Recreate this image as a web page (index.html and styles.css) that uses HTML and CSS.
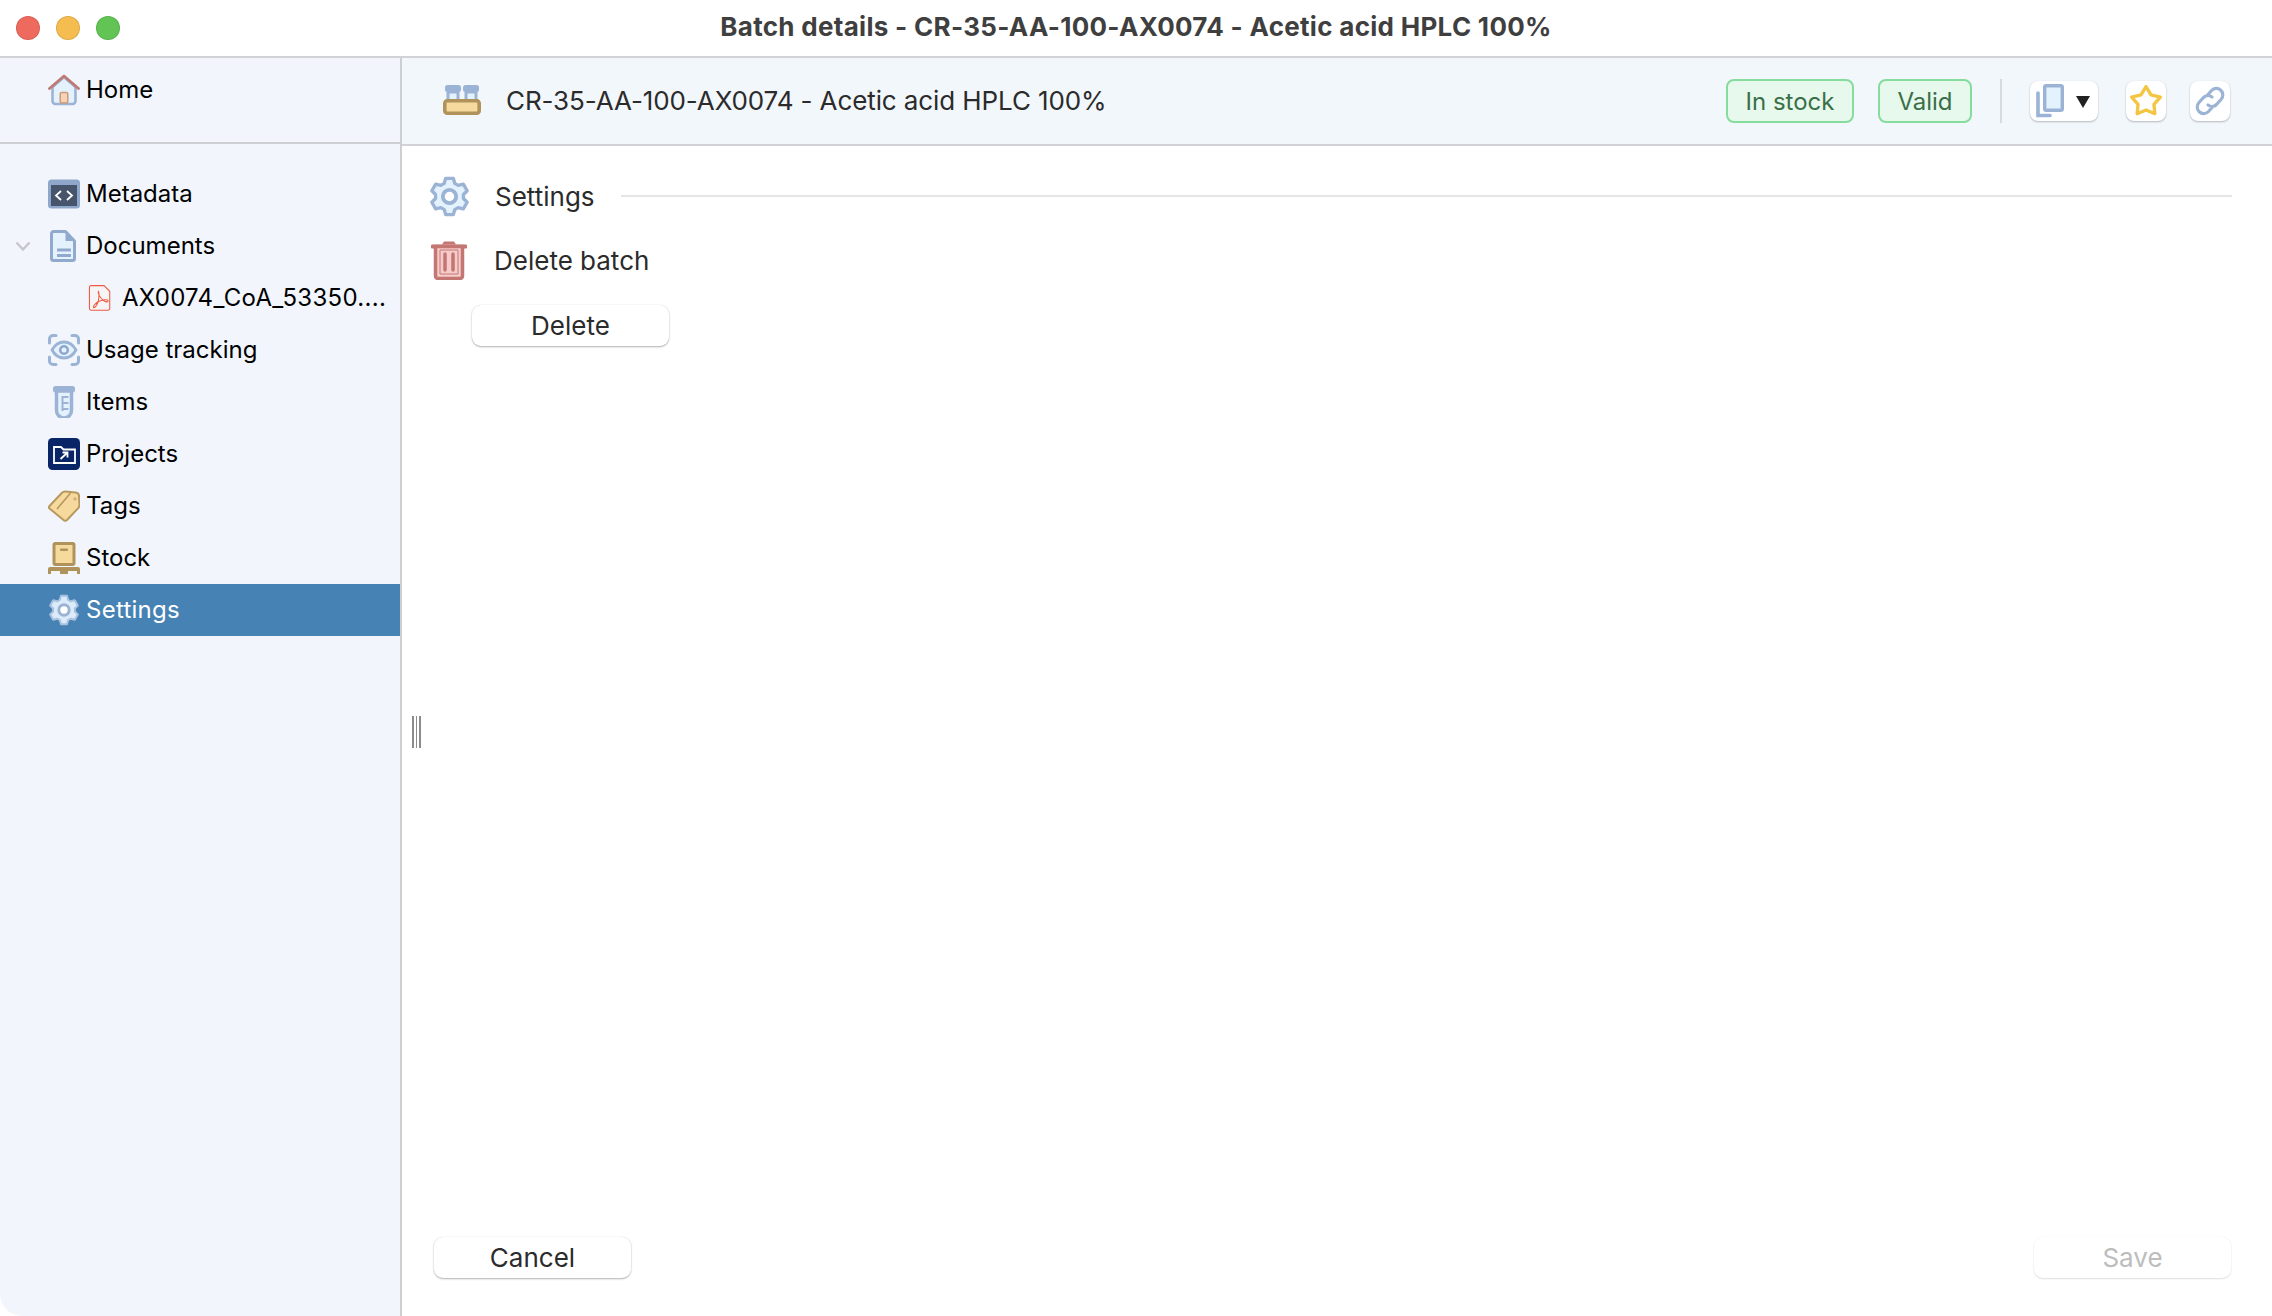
FILE: index.html
```html
<!DOCTYPE html>
<html lang="en">
<head>
<meta charset="utf-8">
<title>Batch details</title>
<link rel="stylesheet" href="styles.css">
</head>
<body>
<svg class="defs" width="0" height="0" aria-hidden="true">
  <symbol id="cog" viewBox="0 0 32 32">
    <polygon points="11.88,5.8 12.99,1.82 19.01,1.82 20.12,5.8 22.77,7.33 26.78,6.3 29.79,11.52 26.89,14.47 26.89,17.53 29.79,20.48 26.78,25.7 22.77,24.67 20.12,26.2 19.01,30.18 12.99,30.18 11.88,26.2 9.23,24.67 5.22,25.7 2.21,20.48 5.11,17.53 5.11,14.47 2.21,11.52 5.22,6.3 9.23,7.33" stroke-linejoin="round"/>
    <circle cx="16" cy="16" r="5.2" class="cog-hole"/>
  </symbol>
</svg>
<div class="window">
  <header class="titlebar">
    <div class="lights">
      <span class="light red"></span>
      <span class="light yellow"></span>
      <span class="light green"></span>
    </div>
    <h1 class="window-title">Batch details - CR-35-AA-100-AX0074 - Acetic acid HPLC 100%</h1>
  </header>
  <div class="body">
    <aside class="sidebar">
      <div class="home-section">
        <div class="row">
          <svg class="icon" viewBox="0 0 32 32"><path d="M4.5 13v14a3 3 0 0 0 3 3h17a3 3 0 0 0 3-3V13L16 3z" fill="#e4f2fe" stroke="#9bb3d5" stroke-width="2.6"/><path d="M1.5 14.5 16 2l14.500 12.500" fill="none" stroke="#bf7a76" stroke-width="2.800" stroke-linejoin="round" stroke-linecap="round"/><rect x="12.200" y="18.500" width="7.600" height="10.500" rx="1.500" fill="#f8d2b4" stroke="#cb9b78" stroke-width="1.500"/></svg>
          <span>Home</span>
        </div>
      </div>
      <nav class="tree">
        <div class="row">
          <svg class="icon" viewBox="0 0 32 32"><rect x="0" y="1.500" width="32" height="29" rx="3.500" fill="#8ea7cb"/><rect x="3" y="7" width="26" height="21" fill="#46556b"/><path d="M13 13l-5 4.500 5 4.500M19 13l5 4.500-5 4.500" fill="none" stroke="#fff" stroke-width="1.800"/></svg>
          <span>Metadata</span>
        </div>
        <div class="row">
          <svg class="chevron" viewBox="0 0 16 12"><path d="M1.500 2.500 8 9.500l6.500-7" fill="none" stroke="#c5c7ca" stroke-width="2.400"/></svg>
          <svg class="icon" viewBox="0 0 32 32"><path d="M5.500 1.500h12l9 9.500v17.500a2 2 0 0 1-2 2h-19a2 2 0 0 1-2-2v-25a2 2 0 0 1 2-2z" fill="#e4f2fe" stroke="#90a9cd" stroke-width="3" stroke-linejoin="round"/><path d="M17.500 1.500v9.500h9z" fill="#90a9cd"/><path d="M9 20h14M9 25.500h14" stroke="#90a9cd" stroke-width="3"/></svg>
          <span>Documents</span>
        </div>
        <div class="row row-child">
          <svg class="icon" viewBox="0 0 32 32"><path d="M5 .800h16l7 7V29a2 2 0 0 1-2 2H5a2 2 0 0 1-2-2V2.800a2 2 0 0 1 2-2z" fill="#f6f4f4" stroke="#ee5a44" stroke-width="1.300"/><path d="M14 8c-1 3 3 8 6 11 2 2 6 2.500 6 .5 0-2-6-1.500-11 .5-4 1.600-8 6-7 7.500s5-3 6-8c.6-3.500 1.200-9.500 0-11.500z" fill="none" stroke="#ee5a44" stroke-width="1.300"/></svg>
          <span class="file-name">AX0074_CoA_53350....</span>
        </div>
        <div class="row">
          <svg class="icon" viewBox="0 0 32 32"><path d="M1.500 9V5a3.500 3.500 0 0 1 3.500-3.500h3M24 1.500h3A3.500 3.500 0 0 1 30.500 5v4M30.500 23v4a3.500 3.500 0 0 1-3.500 3.500h-3M8 30.500H5A3.500 3.500 0 0 1 1.500 27v-4" fill="none" stroke="#9bb3d5" stroke-width="3" stroke-linecap="round"/><path d="M4 16c3-5.500 7.500-8 12-8s9 2.500 12 8c-3 5.500-7.500 8-12 8s-9-2.500-12-8z" fill="#e4f2fe" stroke="#9bb3d5" stroke-width="2.800"/><circle cx="16" cy="16" r="3.800" fill="#e4f2fe" stroke="#8ea7cb" stroke-width="2.600"/></svg>
          <span>Usage tracking</span>
        </div>
        <div class="row">
          <svg class="icon" viewBox="0 0 32 32"><rect x="5" y="0" width="22" height="6.500" rx="2.500" fill="#9bb3d5"/><path d="M8.500 5h15v19.500a7.500 7.500 0 0 1-15 0z" fill="#e4f2fe" stroke="#9bb3d5" stroke-width="3.500"/><path d="M14.500 10v15M14.500 11h6M14.500 17h6M14.500 23h6" fill="none" stroke="#9bb3d5" stroke-width="2"/></svg>
          <span>Items</span>
        </div>
        <div class="row">
          <svg class="icon" viewBox="0 0 32 32"><rect width="32" height="32" rx="4.500" fill="#0a2468"/><path d="M6 9h7l2.500 2.500H27V25H6z" fill="none" stroke="#fff" stroke-width="1.800"/><path d="M12.500 21 19 15M14.500 14.500h5v5" fill="none" stroke="#fff" stroke-width="1.800"/></svg>
          <span>Projects</span>
        </div>
        <div class="row">
          <svg class="icon" viewBox="0 0 32 32"><path d="M1.500 16 14 2.800c1-1 2-1.300 3.500-1.200l10 .8c2.500.2 3.500 1.500 3.500 3.500l.4 9c0 1.500-.4 2.500-1.400 3.500L19 30c-1 1-2.500 1-3.500 0l-14-11.500c-1-.8-1-1.700 0-2.500z" fill="#f6d99c" stroke="#b7995f" stroke-width="2"/><path d="M9 19 22.500 3" fill="none" stroke="#b7995f" stroke-width="1.600"/><circle cx="27" cy="9" r="1.200" fill="none" stroke="#b7995f" stroke-width=".8"/></svg>
          <span>Tags</span>
        </div>
        <div class="row">
          <svg class="icon" viewBox="0 0 32 32"><rect x="6" y="1.500" width="20" height="21" rx="1.500" fill="#f6d99c" stroke="#b0935a" stroke-width="3"/><rect x="12" y="6.500" width="8" height="2.600" rx="1" fill="#b0935a"/><path d="M0 27a2 2 0 0 1 2-2h28a2 2 0 0 1 2 2v5h-3v-3h-9v3h-8v-3H3v3H0z" fill="#b0935a"/></svg>
          <span>Stock</span>
        </div>
        <div class="row row-selected">
          <svg class="icon cog-light"><use href="#cog"/></svg>
          <span>Settings</span>
        </div>
      </nav>
    </aside>
    <main class="main">
      <div class="batch-header">
        <svg class="batch-icon" viewBox="0 0 38 30"><path d="M5 7h10v9H5zM23 7h10v9H23z" fill="#e4f2fe" stroke="#9bb3d5" stroke-width="3"/><rect x="2" y="0" width="16" height="7" rx="2.500" fill="#9bb3d5"/><rect x="20" y="0" width="16" height="7" rx="2.500" fill="#9bb3d5"/><rect x="1.800" y="15.800" width="34.400" height="12.400" rx="2.500" fill="#f6d99c" stroke="#b0935a" stroke-width="3.600"/></svg>
        <span class="batch-title">CR-35-AA-100-AX0074 - Acetic acid HPLC 100%</span>
        <div class="batch-actions">
          <span class="badge badge-stock">In stock</span>
          <span class="badge badge-valid">Valid</span>
          <span class="action-divider"></span>
          <button class="tool tool-copy" type="button">
            <svg class="tool-copy-icon" viewBox="0 0 28 34"><path d="M2 9v22.500h12" fill="none" stroke="#9bb3d5" stroke-width="3.600" stroke-linecap="round"/><rect x="8.700" y="1.700" width="17.600" height="24.600" rx="1.500" fill="#e4f2fe" stroke="#9bb3d5" stroke-width="3.400"/></svg>
            <svg class="tool-caret" viewBox="0 0 14 12"><path d="M0 0h14L7 12z" fill="#222"/></svg>
          </button>
          <button class="tool" type="button">
            <svg class="tool-icon" viewBox="1.500 1.500 29 29"><path d="M16 3l4.500 7.500 8.500 2-5.800 6.500.8 8.500-8-3.300-8 3.300.8-8.500L3 12.500l8.500-2z" fill="#fff" stroke="#f4c542" stroke-width="3" stroke-linejoin="round"/></svg>
          </button>
          <button class="tool" type="button">
            <svg class="tool-icon" viewBox="0 0 32 32"><path d="M13.500 10l4-4.500a6.500 6.500 0 0 1 9.500 9l-4.500 5a6.500 6.500 0 0 1-8.500.5M18.500 22l-4 4.500a6.500 6.500 0 0 1-9.500-9l4.500-5a6.500 6.500 0 0 1 8.500-.5" fill="none" stroke="#9bb3d5" stroke-width="3.200" stroke-linecap="round"/></svg>
          </button>
        </div>
      </div>
      <div class="content">
        <div class="section-head">
          <svg class="section-icon cog-outline"><use href="#cog"/></svg>
          <span class="section-label">Settings</span>
          <span class="section-rule"></span>
        </div>
        <div class="section-head">
          <svg class="section-icon" viewBox="0 0 36 40"><path d="M1.500 6.500h33" stroke="#c47673" stroke-width="4" stroke-linecap="round"/><path d="M11 4.500 13 1.500h10l2 3z" fill="#c47673"/><path d="M4.500 6.500h27V36a2.500 2.500 0 0 1-2.500 2.500H7A2.500 2.500 0 0 1 4.500 36z" fill="#f6cccb" stroke="#c47673" stroke-width="3.500"/><path d="M9 10h18v24H9z" fill="none" stroke="#c47673" stroke-width="1"/><path d="M14 14v16M22 14v16" stroke="#c47673" stroke-width="3.500" stroke-linecap="round"/></svg>
          <span class="section-label">Delete batch</span>
        </div>
        <button class="btn btn-delete" type="button">Delete</button>
      </div>
      <footer class="footer">
        <button class="btn" type="button">Cancel</button>
        <button class="btn btn-disabled" type="button" disabled>Save</button>
      </footer>
    </main>
    <div class="splitter"></div>
  </div>
</div>
</body>
</html>
```
FILE: styles.css
```css
* { box-sizing: border-box; }
html, body { margin: 0; height: 100%; background: #fff; }
body { font-family: Inter, "Liberation Sans", sans-serif; font-size: 24px; color: #000; overflow: hidden; }
.defs { position: absolute; }
.window { height: 1316px; display: flex; flex-direction: column; }

.titlebar { height: 58px; flex: none; display: flex; align-items: center; justify-content: center; padding-bottom: 3px; border-bottom: 2px solid #d0d2d5; position: relative; }
.lights { position: absolute; left: 16px; top: 16px; display: flex; gap: 16px; }
.light { width: 24px; height: 24px; border-radius: 50%; border: 1px solid rgba(0,0,0,.1); }
.red { background: #ee6a5f; }
.yellow { background: #f5bd4f; }
.green { background: #61c454; }
.window-title { margin: 0; font-size: 26px; font-weight: 700; letter-spacing: .3px; color: #3f3f3f; line-height: 1; }

.body { flex: 1; display: flex; position: relative; min-height: 0; }
.sidebar { width: 402px; flex: none; background: #f2f6fc; border-right: 2px solid #cdcfd2; border-bottom-left-radius: 22px; }
.home-section { height: 86px; border-bottom: 2px solid #cdcfd2; margin-bottom: 24px; padding-top: 0; }
.home-section .row { height: 62px; padding-top: 2px; }
.tree { display: flex; flex-direction: column; }
.row { height: 52px; display: flex; align-items: center; padding-left: 48px; gap: 6px; position: relative; line-height: 1; }
.row-child { padding-left: 87px; gap: 9px; }
.row-child .icon { width: 26px; }
.row-selected { background: #4682b4; color: #fff; letter-spacing: .25px; }
.icon { width: 32px; height: 32px; flex: none; }
.chevron { position: absolute; left: 15px; top: 20px; width: 16px; height: 12px; }
.file-name { white-space: nowrap; letter-spacing: .3px; }
.cog-light { fill: #dcebfa; stroke: #a9c2df; stroke-width: 2; }
.cog-light .cog-hole { fill: #4682b4; }
.cog-hole { fill: #fff; stroke: #9bb3d5; stroke-width: 3; }
.cog-outline { fill: #e4f2fe; stroke: #9bb3d5; stroke-width: 2.600; }

.main { flex: 1; min-width: 0; display: flex; flex-direction: column; font-size: 26px; }
.batch-header { height: 88px; flex: none; display: flex; align-items: center; padding: 0 42px 2px 41px; background: #f2f7fc; border-bottom: 2px solid #d0d2d5; }
.batch-icon { width: 38px; height: 30px; flex: none; margin-right: 25px; }
.batch-title { color: #2b2b2b; white-space: nowrap; letter-spacing: -.1px; }
.batch-actions { margin-left: auto; display: flex; align-items: center; margin-top: 2px; }
.badge { height: 44px; display: flex; align-items: center; justify-content: center; border-radius: 8px; border: 2px solid #86dc9d; background: #e7f9ec; color: #3a6f49; font-size: 24px; }
.badge-stock { width: 128px; margin-right: 24px; }
.badge-valid { width: 94px; }
.action-divider { width: 2px; height: 44px; background: #d8dadd; margin: 0 28px 0 28px; }
.tool { width: 40px; height: 40px; padding: 0; border: 0; border-radius: 8px; background: #fff; box-shadow: 0 1px 2px rgba(0,0,0,.25), 0 0 1px rgba(0,0,0,.1); display: flex; align-items: center; justify-content: center; margin-left: 24px; }
.tool-copy { width: 68px; margin-left: 0; margin-right: 4px; padding-left: 6px; justify-content: flex-start; }
.tool-copy-icon { width: 28px; height: 34px; }
.tool-caret { width: 14px; height: 12px; margin: 2px 0 0 12px; }
.tool-icon { width: 32px; height: 32px; }

.content { padding: 18px 0 0 29px; flex: 1; display: flex; flex-direction: column; }
.section-head { display: flex; align-items: center; height: 64px; padding-right: 40px; }
.section-icon { width: 36px; height: 40px; flex: none; }
.section-icon.cog-outline { width: 41px; height: 41px; margin: 0 -2px 0 -2px; }
.section-label { margin-left: 27px; color: #2b2b2b; white-space: nowrap; }
.section-rule { flex: 1; height: 2px; background: #e4e5e7; margin-left: 26px; }

.btn { width: 197px; height: 41px; padding: 0; border: 0; border-radius: 9px; background: #fff; font: inherit; color: #2b2b2b; box-shadow: 0 1px 2px rgba(0,0,0,.3), 0 0 1px rgba(0,0,0,.15); }
.btn-delete { margin: 13px 0 0 41px; align-self: flex-start; }
.btn-disabled { color: #bdbdbd; box-shadow: 0 1px 2px rgba(0,0,0,.13), 0 0 1px rgba(0,0,0,.08); }
.footer { display: flex; justify-content: space-between; padding: 0 41px 38px 32px; flex: none; }

.splitter { position: absolute; left: 412px; top: 658px; width: 9px; height: 32px; border-left: 2px solid #8c8c8c; border-right: 2px solid #8c8c8c; background: linear-gradient(#8c8c8c,#8c8c8c) center / 1px 100% no-repeat; }
```
